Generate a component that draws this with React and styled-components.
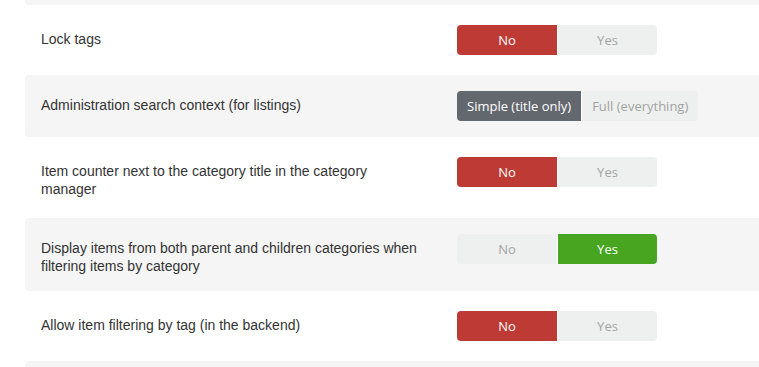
import React from "react";
import styled, { createGlobalStyle } from "styled-components";

const GlobalStyle = createGlobalStyle`
  html, body {
    margin: 0;
    padding: 0;
    background: #ffffff;
    overflow: hidden;
  }
`;

const Page = styled.div`
  padding-left: 25px;
  width: 800px;
`;

const List = styled.div`
  display: flex;
  flex-direction: column;
`;

const Row = styled.div`
  display: flex;
  align-items: flex-start;
  gap: 36px;
  padding: ${(p) => (p.$striped ? "16px" : "20px")} 16px;
  background: ${(p) => (p.$striped ? "#f5f5f5" : "#ffffff")};
  border-radius: 4px;
`;

/* rows cut by the window edge: only their grey stripe shows */
const Stub = styled.div`
  height: ${(p) => p.$h}px;
  background: #f5f5f5;
  border-radius: ${(p) => (p.$top ? "0 0 4px 4px" : "4px 4px 0 0")};
`;

const Label = styled.div`
  flex: 0 0 380px;
  padding-top: 5px;
  font-family: "Liberation Sans", Arial, sans-serif;
  font-size: 14px;
  line-height: 18px;
  color: #333333;
`;

const Group = styled.div`
  display: flex;
  height: 30px;
`;

const Option = styled.div`
  display: flex;
  align-items: center;
  justify-content: center;
  min-width: ${(p) => (p.$wide ? "100px" : "auto")};
  padding: 0 10px;
  box-sizing: border-box;
  font-family: "Open Sans", "DejaVu Sans", sans-serif;
  font-size: 13px;
  background: ${(p) => p.$bg};
  color: ${(p) => p.$fg};
  & + & {
    border-left: 1px solid #ffffff;
  }
  &:first-child {
    border-radius: 4px 0 0 4px;
  }
  &:last-child {
    border-radius: 0 4px 4px 0;
  }
`;

const OFF = { bg: "#eef0ef", fg: "#a3a3a3" };
const ON = {
  no: { bg: "#bd3a35", fg: "#ffffff" },
  yes: { bg: "#47a51f", fg: "#ffffff" },
  dark: { bg: "#63676e", fg: "#ffffff" },
};

const Toggle = ({ options, active }) => (
  <Group>
    {options.map((o, i) => {
      const c = i === active ? ON[o.tone] : OFF;
      return (
        <Option key={o.text} $bg={c.bg} $fg={c.fg} $wide={o.wide}>
          {o.text}
        </Option>
      );
    })}
  </Group>
);

const noYes = [
  { text: "No", tone: "no", wide: true },
  { text: "Yes", tone: "yes", wide: true },
];

const rows = [
  { label: "Lock tags", options: noYes, active: 0 },
  {
    label: "Administration search context (for listings)",
    options: [
      { text: "Simple (title only)", tone: "dark" },
      { text: "Full (everything)", tone: "dark" },
    ],
    active: 0,
  },
  {
    label: "Item counter next to the category title in the category manager",
    options: noYes,
    active: 0,
  },
  {
    label:
      "Display items from both parent and children categories when filtering items by category",
    options: noYes,
    active: 1,
  },
  { label: "Allow item filtering by tag (in the backend)", options: noYes, active: 0 },
];

export default function App() {
  return (
    <Page>
      <GlobalStyle />
      <List>
        <Stub $top $h={5} />
        {rows.map((r, i) => (
          <Row key={r.label} $striped={i % 2 === 1}>
            <Label>{r.label}</Label>
            <Toggle options={r.options} active={r.active} />
          </Row>
        ))}
        <Stub $h={20} />
      </List>
    </Page>
  );
}
